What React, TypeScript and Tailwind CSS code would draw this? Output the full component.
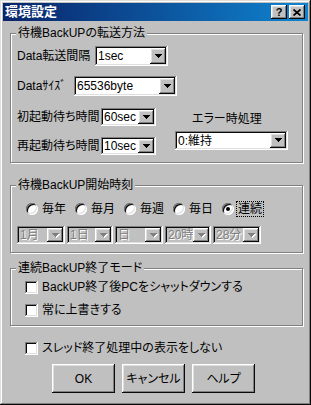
import React from 'react';

const raised = 'shadow-[inset_-1px_-1px_#0a0a0a,inset_1px_1px_#fff,inset_-2px_-2px_#808080,inset_2px_2px_#dfdfdf]';
const sunken = 'shadow-[inset_-1px_-1px_#fff,inset_1px_1px_#808080,inset_-2px_-2px_#dfdfdf,inset_2px_2px_#0a0a0a]';

function Arrow({ disabled = false }: { disabled?: boolean }) {
  const fill = disabled ? '#808080' : '#000';
  return (
    <svg width="8" height="5" viewBox="0 0 8 5" shapeRendering="crispEdges">
      {disabled && (
        <g fill="#fff">
          <rect x="1" y="1" width="7" height="1" />
          <rect x="2" y="2" width="5" height="1" />
          <rect x="3" y="3" width="3" height="1" />
          <rect x="4" y="4" width="1" height="1" />
        </g>
      )}
      <g fill={fill}>
        <rect x="0" y="0" width="7" height="1" />
        <rect x="1" y="1" width="5" height="1" />
        <rect x="2" y="2" width="3" height="1" />
        <rect x="3" y="3" width="1" height="1" />
      </g>
    </svg>
  );
}

function Combo({ value, className = '', disabled = false }: { value: string; className?: string; disabled?: boolean }) {
  return (
    <div className={`flex shrink-0 p-[2px] ${sunken} ${disabled ? 'bg-[#c0c0c0]' : 'bg-white'} ${className}`}>
      <span
        className={`flex flex-1 items-center overflow-hidden whitespace-nowrap pl-[1px] ${
          disabled ? 'text-[#808080] [text-shadow:1px_1px_0_#fff]' : 'text-black'
        }`}
      >
        {value}
      </span>
      <div className={`flex w-[16px] items-center justify-center bg-[#c0c0c0] pl-[1px] ${raised}`}>
        <Arrow disabled={disabled} />
      </div>
    </div>
  );
}

function Group({ title, className = '', children }: { title: string; className?: string; children: React.ReactNode }) {
  return (
    <div className={`relative shrink-0 border border-[#808080] shadow-[inset_1px_1px_#fff,1px_1px_#fff] ${className}`}>
      <span className="absolute left-[5px] top-[-8px] whitespace-nowrap bg-[#c0c0c0] px-[2px] leading-[14px]">{title}</span>
      {children}
    </div>
  );
}

function Radio({ label, checked = false, focused = false }: { label: string; checked?: boolean; focused?: boolean }) {
  return (
    <div className="flex w-[49px] shrink-0 items-center">
      <div className={`flex h-[12px] w-[12px] items-center justify-center rounded-full bg-white ${sunken}`}>
        {checked && <div className="h-[4px] w-[4px] rounded-full bg-black" />}
      </div>
      {focused ? (
        <span className="ml-[3px] whitespace-nowrap px-[1px] outline-1 outline-dotted outline-black">{label}</span>
      ) : (
        <span className="ml-[4px] whitespace-nowrap">{label}</span>
      )}
    </div>
  );
}

function Check({ label, className = '' }: { label: string; className?: string }) {
  return (
    <div className={`flex h-[14px] items-center ${className}`}>
      <div className={`h-[13px] w-[13px] shrink-0 bg-white ${sunken}`} />
      <span className="ml-[4px] whitespace-nowrap">{label}</span>
    </div>
  );
}

function Button({ label }: { label: string }) {
  return (
    <div className={`flex h-[29px] w-[63px] items-center justify-center bg-[#c0c0c0] ${raised}`}>
      <span className="whitespace-nowrap">{label}</span>
    </div>
  );
}

export default function App() {
  return (
    <div className="flex h-[405px] w-[311px] flex-col bg-[#c0c0c0] p-[3px] font-['Liberation_Sans','Noto_Sans_CJK_JP',sans-serif] text-[12px] leading-[14px] text-black [font-feature-settings:'palt'] shadow-[inset_-1px_-1px_#0a0a0a,inset_1px_1px_#dfdfdf,inset_-2px_-2px_#808080,inset_2px_2px_#fff]">
      {/* Title bar */}
      <div className="flex h-[18px] shrink-0 items-center bg-linear-to-r from-[#0a246a] to-[#1084d0] pl-[2px] pr-[3px]">
        <span className="flex-1 text-[13px] font-bold text-white">環境設定</span>
        <div className={`flex h-[14px] w-[16px] items-center justify-center bg-[#c0c0c0] ${raised}`}>
          <span className="font-['Liberation_Sans',sans-serif] text-[11px] font-bold leading-none">?</span>
        </div>
        <div className={`ml-[2px] flex h-[14px] w-[16px] items-center justify-center bg-[#c0c0c0] ${raised}`}>
          <svg width="8" height="7" viewBox="0 0 8 7">
            <path d="M0.5 0.5L7.5 6.5M7.5 0.5L0.5 6.5" stroke="#000" strokeWidth="1.7" />
          </svg>
        </div>
      </div>

      {/* Transfer method */}
      <Group title="待機BackUPの転送方法" className="ml-[7px] mt-[12px] h-[130px] w-[293px] px-[6px] pt-[12px]">
        <div className="flex h-[20px] items-center">
          <span className="w-[78px] shrink-0 whitespace-nowrap">Data転送間隔</span>
          <Combo value="1sec" className="h-[20px] w-[73px]" />
        </div>
        <div className="mt-[10px] flex h-[20px] items-center">
          <span className="w-[57px] shrink-0 whitespace-nowrap">Dataｻｲｽﾞ</span>
          <Combo value="65536byte" className="h-[20px] w-[103px]" />
        </div>
        <div className="mt-[12px] flex">
          <div className="flex flex-col">
            <div className="flex h-[18px] items-center">
              <span className="w-[84px] shrink-0 whitespace-nowrap">初起動待ち時間</span>
              <Combo value="60sec" className="h-[18px] w-[55px]" />
            </div>
            <div className="mt-[11px] flex h-[18px] items-center">
              <span className="w-[84px] shrink-0 whitespace-nowrap">再起動待ち時間</span>
              <Combo value="10sec" className="h-[18px] w-[55px]" />
            </div>
          </div>
          <div className="ml-[19px] flex flex-col">
            <span className="mt-[4px] whitespace-nowrap pl-[17px]">エラー時処理</span>
            <Combo value="0:維持" className="mt-[5px] h-[19px] w-[113px]" />
          </div>
        </div>
      </Group>

      {/* Start time */}
      <Group title="待機BackUP開始時刻" className="ml-[7px] mt-[22px] h-[68px] w-[293px] px-[6px] pt-[16px]">
        <div className="ml-[9px] flex h-[14px] items-center">
          <Radio label="毎年" />
          <Radio label="毎月" />
          <Radio label="毎週" />
          <Radio label="毎日" />
          <Radio label="連続" checked focused />
        </div>
        <div className="mt-[10px] flex gap-[2px]">
          <Combo value="1月" disabled className="h-[18px] w-[48px]" />
          <Combo value="1日" disabled className="h-[18px] w-[46px]" />
          <Combo value="日" disabled className="h-[18px] w-[48px]" />
          <Combo value="20時" disabled className="h-[18px] w-[46px]" />
          <Combo value="28分" disabled className="h-[18px] w-[48px]" />
        </div>
      </Group>

      {/* End mode */}
      <Group title="連続BackUP終了モード" className="ml-[7px] mt-[15px] h-[58px] w-[293px] pl-[14px] pt-[11px]">
        <Check label="BackUP終了後PCをシャットダウンする" />
        <Check label="常に上書きする" className="mt-[9px]" />
      </Group>

      <Check label="スレッド終了処理中の表示をしない" className="ml-[22px] mt-[15px]" />

      <div className="ml-[49px] mt-[9px] flex gap-[7px]">
        <Button label="OK" />
        <Button label="キャンセル" />
        <Button label="ヘルプ" />
      </div>
    </div>
  );
}
